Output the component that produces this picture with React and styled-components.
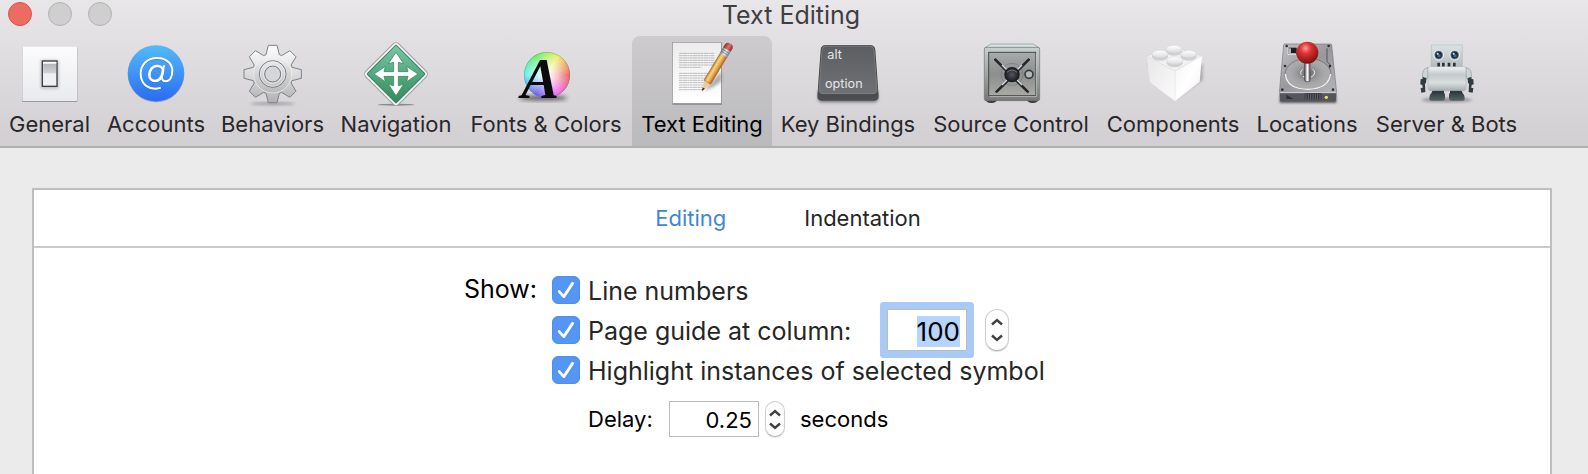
import React, { useEffect, useRef, useState } from "react";
import styled, { createGlobalStyle } from "styled-components";

const GlobalStyle = createGlobalStyle`
  *, *::before, *::after { box-sizing: border-box; }
  body {
    margin: 0;
    background: #ebebeb;
    font-family: Inter, "Liberation Sans", sans-serif;
    color: #262626;
  }
  button, input { font-family: inherit; color: inherit; }
`;

const Window = styled.div`
  display: flex;
  flex-direction: column;
  min-height: 100vh;
`;

const Header = styled.header`
  background: linear-gradient(#e8e6e9, #d1cfd2);
  border-bottom: 2px solid #b0afb1;
`;

const TitleBar = styled.div`
  display: grid;
  grid-template-columns: 1fr auto 1fr;
  align-items: start;
  height: 36px;
  padding: 2px 14px 0 8px;
`;

const Lights = styled.div`
  display: flex;
  gap: 16px;
`;

const Light = styled.button`
  width: 24px;
  height: 24px;
  padding: 0;
  border-radius: 50%;
  border: 1px solid ${(p) => (p.$close ? "#d9534a" : "#b3b2b3")};
  background: ${(p) => (p.$close ? "#ed6b60" : "#d0cfd0")};
`;

const Title = styled.h1`
  margin: 0;
  font-size: 25px;
  line-height: 26px;
  font-weight: 400;
  color: #403e41;
`;

const Toolbar = styled.nav`
  display: flex;
`;

const ToolButton = styled.button`
  display: flex;
  flex-direction: column;
  align-items: center;
  flex: none;
  width: ${(p) => p.$width}px;
  padding: 2px 0 8px;
  border: 0;
  border-radius: 8px 8px 0 0;
  background: ${(p) => (p.$active ? "linear-gradient(#cdcbce, #bab9bb)" : "none")};
  color: ${(p) => (p.$active ? "#000" : "#29272a")};
  font-size: 22px;
  line-height: 28px;
  white-space: nowrap;
`;

const Art = styled.svg`
  display: block;
  width: 72px;
  height: 72px;
`;

const Panel = styled.main`
  flex: 1;
  margin: 40px 36px 0 32px;
  padding-bottom: 32px;
  background: #fff;
  border: 2px solid #bfbfbf;
  border-bottom: 0;
`;

const PaneTabs = styled.div`
  display: flex;
  justify-content: center;
  gap: 78px;
  padding-right: 8px;
  border-bottom: 2px solid #cbcbcb;
`;

const PaneTab = styled.button`
  padding: 0;
  border: 0;
  background: none;
  font-size: 22px;
  line-height: 56px;
  color: ${(p) => (p.$active ? "#3f86d8" : "#262626")};
`;

const Form = styled.form`
  display: grid;
  grid-template-columns: calc(50% - 255px) 1fr;
  column-gap: 15px;
  padding-top: 22px;
  font-size: 25px;
  line-height: 40px;
  white-space: nowrap;
`;

const GroupLabel = styled.div`
  text-align: right;
  line-height: 38px;
  color: #000;
`;

const Options = styled.div`
  display: flex;
  flex-direction: column;
`;

const Row = styled.div`
  display: flex;
  align-items: center;
  height: 40px;
`;

const DelayRow = styled(Row)`
  margin-top: 9px;
  padding-left: 36px;
  font-size: 22px;
  color: #000;
`;

const OptionLabel = styled.label`
  display: flex;
  align-items: center;
  gap: 8px;
  min-width: ${(p) => p.$min || 0}px;
`;

const OptionText = styled.span`
  padding-top: 2px;
`;

const DelayLabel = styled.label`
  min-width: 81px;
`;

const CheckCell = styled.span`
  display: grid;
  flex: none;

  > * { grid-area: 1 / 1; }
  > svg { pointer-events: none; }
`;

const Box = styled.input`
  appearance: none;
  width: 28px;
  height: 28px;
  margin: 0;
  border-radius: 6px;
  border: 1px solid #b8b8b8;
  background: #fff;

  &:checked {
    border-color: #4b8ff0;
    background: #5596f4;
  }
`;

const Field = styled.input`
  width: ${(p) => p.$width}px;
  height: ${(p) => p.$height}px;
  padding: ${(p) => p.$top || 0}px 6px 0;
  border: 1px solid #bcbcbc;
  border-radius: 0;
  background: #fff;
  font-size: ${(p) => p.$size}px;
  text-align: right;
  outline: 0;
  color: #000;

  &:focus { box-shadow: 0 0 0 7px #a9caf6; border-radius: 1px; }
  &::selection { background: #b5d5fd; color: #000; }
`;

const StepperBox = styled.span`
  display: flex;
  flex-direction: column;
  width: ${(p) => p.$width}px;
  height: ${(p) => p.$height}px;
  margin-left: ${(p) => p.$gap}px;
  padding: 4px 0;
  border: 1px solid #cfcfcf;
  border-bottom-color: #b4b4b4;
  border-radius: 12px;
  background: #fff;
  box-shadow: 0 1px 1px #00000020;
`;

const Step = styled.button`
  display: flex;
  flex: 1;
  align-items: center;
  justify-content: center;
  padding: 0;
  border: 0;
  background: none;
`;

const Unit = styled.span`
  margin-left: 15px;
`;

function Stepper({ width, height, gap, label, onStep }) {
  return (
    <StepperBox $width={width} $height={height} $gap={gap}>
      <Step type="button" aria-label={`Increase ${label}`} onClick={() => onStep(1)}>
        <svg width="12" height="8" viewBox="0 0 12 8" fill="none" stroke="#404040" strokeWidth="2.4">
          <path d="M1 6.5 6 2l5 4.5" />
        </svg>
      </Step>
      <Step type="button" aria-label={`Decrease ${label}`} onClick={() => onStep(-1)}>
        <svg width="12" height="8" viewBox="0 0 12 8" fill="none" stroke="#404040" strokeWidth="2.4">
          <path d="M1 1.500 6 6l5-4.500" />
        </svg>
      </Step>
    </StepperBox>
  );
}

function CheckOption({ children, min }) {
  return (
    <OptionLabel $min={min}>
      <CheckCell>
        <Box type="checkbox" defaultChecked />
        <svg width="28" height="28" viewBox="0 0 28 28" fill="none" stroke="#fff" strokeWidth="2.8" strokeLinecap="round" strokeLinejoin="round">
          <path d="M7.2 15.6 11.8 20.6 20.6 7.4" />
        </svg>
      </CheckCell>
      <OptionText>{children}</OptionText>
    </OptionLabel>
  );
}

function Stops({ id, colors, x2 = 0, y2 = 1 }) {
  return (
    <linearGradient id={id} x1="0" y1="0" x2={x2} y2={y2}>
      {colors.map((c, i) => (
        <stop key={i} offset={i / (colors.length - 1)} stopColor={c} />
      ))}
    </linearGradient>
  );
}

function Blur({ id, by }) {
  return (
    <filter id={id} x="-50%" y="-50%" width="200%" height="200%">
      <feGaussianBlur stdDeviation={by} />
    </filter>
  );
}

function GeneralIcon() {
  return (
    <Art viewBox="43 114 216 216">
      <defs>
        <Stops id="plate" colors={["#fcfcfd", "#e9eaee"]} />
        <Stops id="rocker" colors={["#b4b5ba", "#d2d3d6"]} />
        <Blur id="plateBlur" by="5" />
      </defs>
      <rect x="67" y="141" width="166" height="165" rx="3" fill="#9b9a9e" />
      <rect x="68" y="140" width="164" height="163" rx="3" fill="url(#plate)" />
      <rect x="123" y="180" width="54" height="86" rx="4" fill="#9a9ca3" opacity=".55" filter="url(#plateBlur)" />
      <rect x="128" y="183" width="44" height="76" fill="#eef0f3" stroke="#3d3e42" strokeWidth="4" />
      <rect x="131" y="191" width="38" height="29" fill="url(#rocker)" />
      <path d="M130 188h40" stroke="#fff" strokeWidth="4" />
    </Art>
  );
}

function AccountsIcon() {
  return (
    <Art viewBox="360 114 216 216">
      <defs>
        <Stops id="sky" colors={["#53bbf8", "#3f94f5", "#2a6bf3"]} />
      </defs>
      <circle cx="468" cy="222" r="85" fill="#7f8798" opacity=".6" />
      <circle cx="468" cy="220" r="84.5" fill="url(#sky)" />
      <g fill="none" strokeLinecap="round">
        {[["#1d55b8", 2.5, 0.5], ["#fff", 0, 1]].map(([stroke, dy, opacity]) => (
          <g key={stroke} stroke={stroke} opacity={opacity} transform={`translate(0 ${dy})`}>
            <path strokeWidth="6" d="M480 264c-33 8-58-11-58-43 0-27 20-47 49-47 27 0 46 16 46 39 0 18-8 31-20 31-8 0-12-5-11-14l6-32" />
            <path strokeWidth="8" d="M489 213c0-9-8-15-17-15-14 0-24 12-24 27 0 11 7 18 17 18 12 0 21-12 24-30Z" />
          </g>
        ))}
      </g>
    </Art>
  );
}

const gearPath = (() => {
  const cx = 816, cy = 222;
  const shape = [[-20, -58], [-13, -86], [13, -86], [20, -58]];
  const points = [];
  for (let i = 0; i < 8; i += 1) {
    const a = (i * Math.PI) / 4;
    shape.forEach(([x, y]) => {
      points.push(
        `${(cx + x * Math.cos(a) - y * Math.sin(a)).toFixed(1)} ${(cy + x * Math.sin(a) + y * Math.cos(a)).toFixed(1)}`
      );
    });
  }
  return `M${points.join("L")}Z`;
})();

function BehaviorsIcon() {
  return (
    <Art viewBox="709 114 216 216">
      <defs>
        <Stops id="steel" colors={["#fdfdfd", "#dcdcdd", "#b0b0b1"]} />
        <Stops id="steelDisc" colors={["#f4f4f4", "#d4d4d5", "#b9b9ba"]} />
        <Blur id="gearBlur" by="4" />
      </defs>
      <ellipse cx="816" cy="311" rx="66" ry="4" fill="#77767a" opacity=".7" filter="url(#gearBlur)" />
      <path d={gearPath} fill="url(#steel)" stroke="#7c828c" strokeWidth="3" strokeLinejoin="round" />
      <circle cx="816" cy="222" r="57" fill="url(#steelDisc)" stroke="#f2f2f2" strokeWidth="2" />
      <circle cx="816" cy="222" r="40" fill="none" stroke="#737985" strokeWidth="3" />
      <circle cx="816" cy="222" r="37" fill="none" stroke="#eee" strokeWidth="2" />
      <circle cx="816" cy="222" r="24" fill="#d6d5d7" stroke="#737985" strokeWidth="3" />
      <circle cx="816" cy="222" r="28" fill="none" stroke="#e9e9e9" strokeWidth="3" />
    </Art>
  );
}

function NavigationIcon() {
  return (
    <Art viewBox="90 114 216 216">
      <defs>
        <Stops id="sign" colors={["#78c9a6", "#55a981", "#33885c"]} x2={1} />
        <Blur id="signBlur" by="2" />
      </defs>
      <ellipse cx="198" cy="314" rx="54" ry="3" fill="#88878b" filter="url(#signBlur)" />
      <g transform="rotate(45 198 222)">
        <rect x="128" y="152" width="140" height="140" rx="12" fill="#fff" stroke="#99989c" strokeWidth="3" />
        <rect x="136" y="160" width="124" height="124" rx="3" fill="url(#sign)" stroke="#2f8058" strokeWidth="3" />
      </g>
      <path
        d="m198 157 23 34-16-4v28h29l-4-16 34 23-34 23 4-16h-29v28l16-4-23 34-23-34 16 4v-28h-29l4 16-34-23 34-23-4 16h29v-28l-16 4Z"
        fill="#fff"
        stroke="#2b7b52"
        strokeWidth="2"
      />
    </Art>
  );
}

const wheelSectors = Array.from({ length: 72 }, (_, i) => {
  const at = (deg) => {
    const a = (deg * Math.PI) / 180;
    return `${(651 + 69 * Math.cos(a)).toFixed(1)} ${(225 - 69 * Math.sin(a)).toFixed(1)}`;
  };
  return { hue: i * 5, d: `M651 225L${at(i * 5 - 3)}L${at(i * 5 + 3)}Z` };
});

function FontsIcon() {
  return (
    <Art viewBox="540 114 216 216">
      <defs>
        <radialGradient id="whiten">
          <stop offset="0" stopColor="#fff" />
          <stop offset=".35" stopColor="#fff" stopOpacity=".7" />
          <stop offset="1" stopColor="#fff" stopOpacity="0" />
        </radialGradient>
        <Blur id="wheelBlur" by="6" />
      </defs>
      <ellipse cx="640" cy="294" rx="72" ry="7" fill="#1c1c1e" opacity=".7" filter="url(#wheelBlur)" />
      {wheelSectors.map((s) => (
        <path key={s.hue} d={s.d} fill={`hsl(${s.hue} 82% 66%)`} />
      ))}
      <circle cx="651" cy="225" r="69" fill="url(#whiten)" />
      <circle cx="651" cy="225" r="68" fill="none" stroke="#6d6d72" strokeWidth="2" opacity=".5" />
      <text x="574" y="294" fontFamily="Liberation Serif, serif" fontStyle="italic" fontWeight="700" fontSize="170" fill="#0b0b0c">
        A
      </text>
    </Art>
  );
}

const textLines = [160, 167, 174, 181, 188, 195, 202, 220, 227, 234, 241, 248, 255, 262, 269];

function TextEditingIcon() {
  return (
    <Art viewBox="138 114 216 216">
      <defs>
        <Stops id="paper" colors={["#ececec", "#fff"]} />
        <Stops id="pencil" colors={["#b97a2b", "#f8d583", "#e6a548", "#a9622a"]} x2={1} y2={0} />
        <Stops id="ferrule" colors={["#737b83", "#edf1f4", "#7c858d"]} x2={1} y2={0} />
        <Stops id="rubber" colors={["#8d2c2a", "#d8746c", "#8d2c2a"]} x2={1} y2={0} />
        <Blur id="pencilBlur" by="4" />
      </defs>
      <rect x="157" y="129" width="149" height="185" fill="#7f7e81" />
      <rect x="157" y="127" width="147" height="183" fill="url(#paper)" stroke="#949395" strokeWidth="2" />
      {textLines.map((y) => (
        <path
          key={y}
          d={`M177 ${y}H${y === 202 ? 244 : y > 234 ? 252 : 284}`}
          stroke="#bcbcbe"
          strokeWidth="3"
          strokeDasharray="9 1 14 1 6 1"
        />
      ))}
      <path d="m252 272 52-58v30q-24 20-52 28Z" fill="#606064" opacity=".5" filter="url(#pencilBlur)" />
      <g transform="translate(246 273) rotate(31)">
        <path d="M0 0-12-33h24Z" fill="#edc9a0" />
        <path d="M0 0-4-11q4 3 8 0Z" fill="#17171a" />
        <path d="M-12-32V-126H12V-32q-6 6-9-1-4 6-8 0-4 5-7 1Z" fill="url(#pencil)" stroke="#8a5523" strokeWidth="1" />
        <rect x="-13" y="-146" width="26" height="21" fill="url(#ferrule)" />
        <path d="M-13-139h26M-13-132h26" stroke="#6a7077" strokeWidth="2" />
        <path d="M-13-145v-11q2-10 13-10t13 10v11Z" fill="url(#rubber)" />
      </g>
    </Art>
  );
}

function KeyIcon() {
  return (
    <Art viewBox="576 114 216 216">
      <defs>
        <Stops id="keyTop" colors={["#5c5e62", "#6f7176"]} />
        <Stops id="keySide" colors={["#4a4b4e", "#3a3b3d", "#4e4f52"]} />
        <Blur id="keyBlur" by="4" />
      </defs>
      <rect x="594" y="270" width="180" height="37" rx="12" fill="#505053" opacity=".7" filter="url(#keyBlur)" />
      <path d="M618 135h132q14 0 16 14l10 140q0 13-13 13H605q-13 0-13-13l10-140q1-14 16-14Z" fill="url(#keySide)" />
      <path d="M618 138h131q12 0 13 12l9 118q1 13-12 13H609q-13 0-12-13l9-118q1-12 12-12Z" fill="url(#keyTop)" stroke="#898b90" strokeWidth="2" />
      <g fill="#e6e6e7" fontFamily="Inter, sans-serif" fontSize="38" fontWeight="400">
        <text x="622" y="177">alt</text>
        <text x="615" y="264">option</text>
      </g>
    </Art>
  );
}

function SafeIcon() {
  return (
    <Art viewBox="165 114 216 216">
      <defs>
        <Stops id="safe" colors={["#c6d0cf", "#a1a5a3", "#777875"]} />
        <Stops id="safeDoor" colors={["#a6adac", "#8b8e8c", "#aaa9a5"]} />
        <radialGradient id="knob">
          <stop offset="0" stopColor="#54565f" />
          <stop offset="1" stopColor="#15161a" />
        </radialGradient>
      </defs>
      <path d="M196 296h36q-2 13-18 13t-18-13ZM320 296h36q-2 13-18 13t-18-13Z" fill="#3a3b3b" />
      <path d="m194 144 18-12h128l18 12Z" fill="#d5e3e3" stroke="#899190" strokeWidth="2" />
      <rect x="193" y="142" width="166" height="160" rx="5" fill="url(#safe)" stroke="#6c7170" strokeWidth="2" />
      <rect x="206" y="157" width="141" height="130" fill="url(#safeDoor)" stroke="#454948" strokeWidth="3" />
      <path d="M209 290h140V160" fill="none" stroke="#d2d7d5" strokeWidth="2" />
      <circle cx="276" cy="223" r="33" fill="none" stroke="#707983" strokeWidth="2" />
      <path d="m226 179 97 96M326 179 230 275" stroke="#24262b" strokeWidth="8" strokeLinecap="round" />
      <path d="m246 195 60 60M306 195l-60 60" stroke="#d7dde1" strokeWidth="4" />
      <circle cx="276" cy="224" r="23" fill="url(#knob)" />
      <path d="M261 217q15-14 30 0" fill="none" stroke="#787a84" strokeWidth="3" />
      <circle cx="327" cy="223" r="12" fill="#aebbbd" stroke="#383c3e" strokeWidth="5" />
    </Art>
  );
}

function BrickIcon() {
  return (
    <Art viewBox="651 114 216 216">
      <defs>
        <Stops id="brickLeft" colors={["#e7e7e8", "#fbfbfb"]} x2={1} />
        <Stops id="brickRight" colors={["#f2f2f2", "#fff", "#ededee"]} x2={1} />
        <Stops id="stud" colors={["#fff", "#dcdcde"]} />
        <Blur id="brickBlur" by="5" />
      </defs>
      <path d="m682 190 80 110 86-60v-48Z" fill="#77767a" opacity=".5" filter="url(#brickBlur)" />
      <path d="m680 168 83-27 83 27-81 46Z" fill="#f1f1f2" stroke="#d3d3d5" strokeWidth="2" />
      <path d="m680 168 85 46v90l-75-57Z" fill="url(#brickLeft)" />
      <path d="m846 168-81 46v90l74-59Z" fill="url(#brickRight)" />
      <path d="M765 214v88" stroke="#e3e3e5" strokeWidth="2" />
      {[[762, 147], [720, 162], [806, 162], [764, 182]].map(([x, y]) => (
        <g key={`${x}-${y}`}>
          <path d={`M${x - 24} ${y}v8q4 12 24 12t24-12v-8Z`} fill="#d0d0d3" />
          <ellipse cx={x} cy={y} rx="24" ry="11" fill="url(#stud)" stroke="#d5d5d7" strokeWidth="1.5" />
        </g>
      ))}
    </Art>
  );
}

function LocationsIcon() {
  return (
    <Art viewBox="93 114 216 216">
      <defs>
        <Stops id="drive" colors={["#c2c2c5", "#99999d", "#b5b5b8"]} x2={1} />
        <radialGradient id="ball" cx=".42" cy=".3" r=".7">
          <stop offset="0" stopColor="#ff9890" />
          <stop offset=".35" stopColor="#df3434" />
          <stop offset="1" stopColor="#7f1014" />
        </radialGradient>
        <radialGradient id="well">
          <stop offset="0" stopColor="#424246" />
          <stop offset="1" stopColor="#8e8e92" stopOpacity="0" />
        </radialGradient>
        <Stops id="rod" colors={["#5b5b5e", "#fff", "#6b6b6e"]} x2={1} y2={0} />
        <Blur id="driveBlur" by="3" />
      </defs>
      <rect x="119" y="286" width="170" height="23" fill="#5c5c60" filter="url(#driveBlur)" />
      <path d="M134 132h138q3 0 3 3l15 144H118l13-144q0-3 3-3Z" fill="url(#drive)" stroke="#77777b" strokeWidth="2" />
      <path d="m118 277 3 27h166l3-27Z" fill="#55555d" />
      <path d="M118 278h172" stroke="#dededf" strokeWidth="3" />
      <path d="m139 284 22 13h-22ZM194 280h50v18h-50Z" fill="#303038" />
      <path d="M198 281v17M205 281v17M212 281v17M219 281v17M226 281v17M233 281v17M240 281v17" stroke="#888890" strokeWidth="2" />
      <circle cx="259" cy="292" r="5" fill="#e8e84a" />
      <ellipse cx="204" cy="222" rx="69" ry="47" fill="#aaaaad" stroke="#67676b" strokeWidth="2" />
      <path d="M136 222q4 45 68 46 62-2 68-46" fill="none" stroke="#f4f4f4" strokeWidth="4" />
      <path d="M145 144h24v20h-24ZM261 145v40l8 8v12" fill="none" stroke="#55555a" strokeWidth="3" />
      <path d="M153 144h16v15h-16Z" fill="#1f1f22" />
      <path d="M144 143v21h24" fill="none" stroke="#f2f2f2" strokeWidth="3" />
      {[[140, 138], [266, 138], [135, 198], [270, 198], [127, 269], [279, 269]].map(([x, y]) => (
        <circle key={`${x}-${y}`} cx={x} cy={y} r="4" fill="#323236" />
      ))}
      <ellipse cx="203" cy="220" rx="56" ry="38" fill="url(#well)" opacity=".7" />
      <ellipse cx="203" cy="218" rx="21" ry="15" fill="none" stroke="#ededee" strokeWidth="3" strokeDasharray="18 7" />
      <rect x="194" y="184" width="16" height="61" rx="5" fill="url(#rod)" stroke="#39393c" strokeWidth="2" />
      <circle cx="202" cy="158" r="33" fill="url(#ball)" />
    </Art>
  );
}

function BotIcon() {
  return (
    <Art viewBox="511 114 216 216">
      <defs>
        <Stops id="botHead" colors={["#dce3e5", "#afb8bb"]} />
        <Stops id="botBody" colors={["#f0f3f4", "#c3cacc", "#d9dedf", "#a6afb2"]} />
        <Stops id="boot" colors={["#343e42", "#566266"]} />
        <Blur id="botBlur" by="4" />
      </defs>
      <ellipse cx="618" cy="300" rx="76" ry="6" fill="#69686c" opacity=".7" filter="url(#botBlur)" />
      {[-1, 1].map((side) => (
        <g key={side} transform={side === 1 ? "translate(1238 0) scale(-1 1)" : undefined}>
          <path d="M562 203q-15 2-16 18v16l12 2 4-16Z" fill="#cdd5d7" stroke="#8e999d" strokeWidth="2" />
          <path d="m546 231 11 3-1 15-3 2 1 25-12 2-2-14h6l-1-9-6-2 1-15 6-1Z" fill="#303c40" />
          <path d="M578 266h32v14h-38Z" fill="#2a3438" />
          <path d="M578 278h29q6 0 6 6v11q0 7-7 7h-34q-7 0-6-8 1-16 12-16Z" fill="url(#boot)" />
        </g>
      ))}
      <path d="M572 135h93v69h-94Z" fill="url(#botHead)" stroke="#a6b1b5" strokeWidth="1.5" />
      <rect x="590" y="187" width="57" height="15" fill="#c3cbce" />
      <path d="M594 188v14M608 188v14M625 188v14M641 188v14" stroke="#293237" strokeWidth="8" />
      {[594, 642].map((x) => (
        <g key={x}>
          <circle cx={x} cy="165" r="15" fill="#aeb8bd" stroke="#e9eef0" strokeWidth="3" />
          <circle cx={x} cy="165" r="11" fill="#1a2731" stroke="#4e6270" strokeWidth="2" />
          <circle cx={x + 1} cy="167" r="5" fill="#3d6b92" />
          <circle cx={x - 3} cy="161" r="3" fill="#dcebf6" />
        </g>
      ))}
      <rect x="562" y="200" width="114" height="72" rx="8" fill="url(#botBody)" stroke="#a5afb2" strokeWidth="1.5" />
    </Art>
  );
}

const tools = [
  { name: "General", width: 99, Icon: GeneralIcon },
  { name: "Accounts", width: 114, Icon: AccountsIcon },
  { name: "Behaviors", width: 119, Icon: BehaviorsIcon },
  { name: "Navigation", width: 128, Icon: NavigationIcon },
  { name: "Fonts & Colors", width: 172, Icon: FontsIcon },
  { name: "Text Editing", width: 140, Icon: TextEditingIcon },
  { name: "Key Bindings", width: 152, Icon: KeyIcon },
  { name: "Source Control", width: 174, Icon: SafeIcon },
  { name: "Components", width: 150, Icon: BrickIcon },
  { name: "Locations", width: 118, Icon: LocationsIcon },
  { name: "Server & Bots", width: 161, Icon: BotIcon },
];

export default function App() {
  const columnRef = useRef(null);
  const [column, setColumn] = useState("100");
  const [delay, setDelay] = useState("0.25");

  useEffect(() => {
    columnRef.current.focus();
    columnRef.current.select();
  }, []);

  return (
    <Window>
      <GlobalStyle />
      <Header>
        <TitleBar>
          <Lights>
            <Light $close aria-label="Close" />
            <Light aria-label="Minimize" />
            <Light aria-label="Zoom" />
          </Lights>
          <Title>Text Editing</Title>
        </TitleBar>
        <Toolbar>
          {tools.map(({ name, width, Icon }) => (
            <ToolButton key={name} $width={width} $active={name === "Text Editing"}>
              <Icon />
              {name}
            </ToolButton>
          ))}
        </Toolbar>
      </Header>
      <Panel>
        <PaneTabs>
          <PaneTab $active>Editing</PaneTab>
          <PaneTab>Indentation</PaneTab>
        </PaneTabs>
        <Form onSubmit={(e) => e.preventDefault()}>
          <GroupLabel>Show:</GroupLabel>
          <Options>
            <Row>
              <CheckOption>Line numbers</CheckOption>
            </Row>
            <Row>
              <CheckOption min={335}>Page guide at column:</CheckOption>
              <Field
                ref={columnRef}
                $width={80}
                $height={42}
                $size={26}
                $top={3}
                aria-label="Page guide column"
                value={column}
                onChange={(e) => setColumn(e.target.value)}
              />
              <Stepper width={24} height={42} gap={18} label="column" onStep={(n) => setColumn(String(Number(column) + n))} />
            </Row>
            <Row>
              <CheckOption>Highlight instances of selected symbol</CheckOption>
            </Row>
            <DelayRow>
              <DelayLabel htmlFor="delay">Delay:</DelayLabel>
              <Field id="delay" $width={90} $height={36} $size={22} $top={1} value={delay} onChange={(e) => setDelay(e.target.value)} />
              <Stepper width={20} height={36} gap={6} label="delay" onStep={(n) => setDelay((Number(delay) + n * 0.25).toFixed(2))} />
              <Unit>seconds</Unit>
            </DelayRow>
          </Options>
        </Form>
      </Panel>
    </Window>
  );
}
